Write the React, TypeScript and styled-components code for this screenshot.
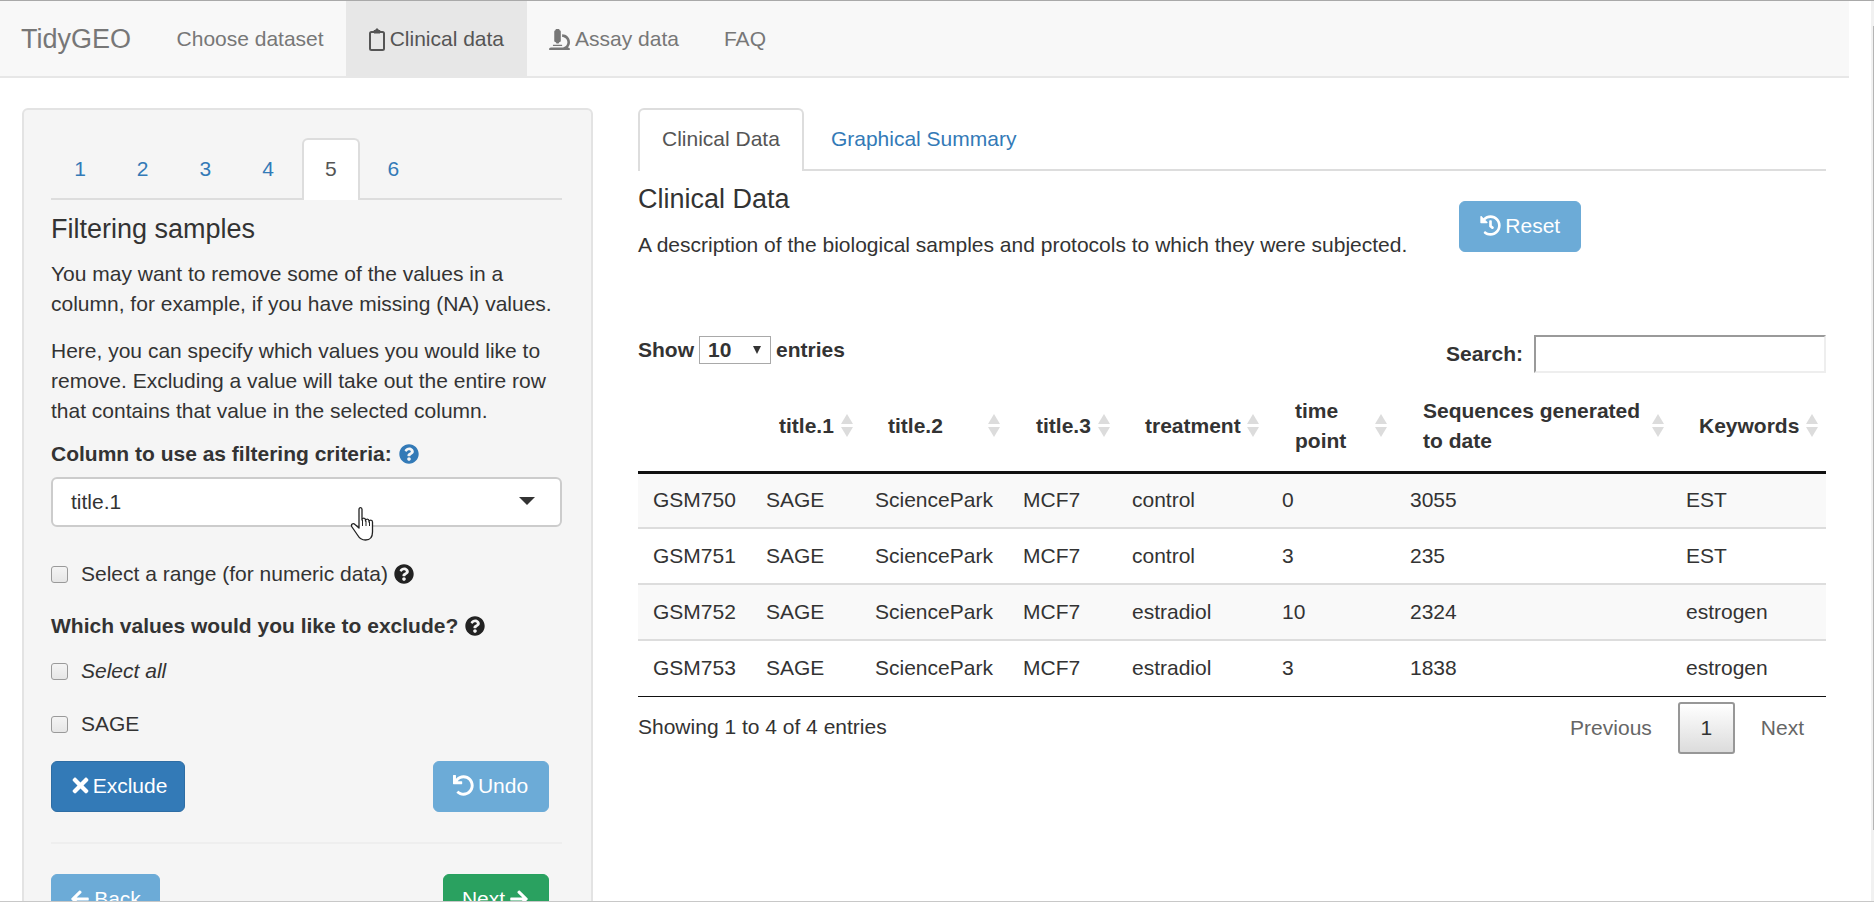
import React from "react";
import styled, { createGlobalStyle } from "styled-components";
import {
  FaArrowLeft,
  FaArrowRight,
  FaHistory,
  FaMicroscope,
  FaQuestionCircle,
  FaTimes,
  FaUndo,
} from "react-icons/fa";

const GlobalStyle = createGlobalStyle`
  html, body {
    margin: 0;
    padding: 0;
    height: 100%;
    overflow: hidden;
    background: #fff;
  }
  body {
    font-family: "Liberation Sans", Arial, sans-serif;
    font-size: 21px;
    line-height: 30px;
    color: #333;
  }
  * { box-sizing: border-box; }
`;

const Viewport = styled.div`
  position: relative;
  width: 1874px;
  height: 902px;
  overflow: hidden;
  border-top: 1px solid #a9a9a9;
  border-bottom: 1px solid #c8c8c8;
`;

const ScrollTrack = styled.div`
  position: absolute;
  top: 0;
  right: 0;
  bottom: 0;
  width: 3px;
  background: #f1f1f1;
`;

const ScrollThumb = styled.div`
  position: absolute;
  top: 25px;
  right: 0;
  height: 804px;
  width: 1px;
  background: #b5b5b5;
`;

const Page = styled.div`
  width: 1849px;
`;

const Navbar = styled.nav`
  display: flex;
  align-items: stretch;
  height: 77px;
  background: #f8f8f8;
  border-bottom: 2px solid #e7e7e7;
`;

const Brand = styled.a`
  display: flex;
  align-items: center;
  padding: 1px 23px 0 21px;
  font-size: 27px;
  color: #777;
`;

const NavItem = styled.a<{ $active?: boolean }>`
  display: flex;
  align-items: center;
  gap: 5px;
  padding: 1px 22.500px 0;
  color: ${(p) => (p.$active ? "#555" : "#777")};
  background: ${(p) => (p.$active ? "#e7e7e7" : "transparent")};
`;

const Main = styled.main`
  display: grid;
  grid-template-columns: 571.500px 1fr;
  column-gap: 45px;
  padding: 30px 23px 0 21.500px;
`;

const Panel = styled.section`
  padding: 28px 29px 19px 27.500px;
  background: #f5f5f5;
  border: 2px solid #e3e3e3;
  border-radius: 6px;
`;

const PanelTabs = styled.ul`
  display: flex;
  gap: 4.700px;
  margin: 0;
  padding: 0;
  list-style: none;
  border-bottom: 2px solid #ddd;
  height: 62px;
`;

const PanelTab = styled.li<{ $active?: boolean }>`
  width: 58px;
  height: 62px;
  padding-top: 14px;
  text-align: center;
  color: ${(p) => (p.$active ? "#555" : "#337ab7")};
  background: ${(p) => (p.$active ? "#fff" : "transparent")};
  border: 2px solid ${(p) => (p.$active ? "#ddd" : "transparent")};
  border-bottom: 0;
  border-radius: 6px 6px 0 0;
`;

const PanelTitle = styled.h3`
  margin: 14px 0 15px;
  font-size: 27px;
  font-weight: 400;
  line-height: 30px;
`;

const Paragraph = styled.p`
  margin: 0 0 17px;
  line-height: 30px;

  & + & {
    margin-bottom: 13px;
  }
`;

const FieldLabel = styled.div`
  display: flex;
  align-items: center;
  gap: 7px;
  font-weight: 700;
`;

const SelectBox = styled.div`
  position: relative;
  display: flex;
  align-items: center;
  justify-content: space-between;
  height: 50px;
  margin: 8px 0 32px;
  padding: 0 25px 0 18px;
  background: #fff;
  border: 2px solid #ccc;
  border-radius: 6px;
`;

const Caret = styled.span`
  width: 0;
  height: 0;
  margin-bottom: 3px;
  border-left: 8px solid transparent;
  border-right: 8px solid transparent;
  border-top: 8px solid #333;
`;

const CursorMark = styled.svg`
  position: absolute;
  left: 297px;
  top: 27px;
`;

const CheckRow = styled.label<{ $gap: number; $top?: number }>`
  display: flex;
  align-items: center;
  gap: 6px;
  margin-top: ${(p) => p.$top ?? 0}px;
  margin-bottom: ${(p) => p.$gap}px;
`;

const CheckBox = styled.span`
  flex: none;
  width: 17px;
  height: 17px;
  margin-right: 7px;
  background: linear-gradient(#f4f4f4, #e6e6e6);
  border: 1.500px solid #9a9a9a;
  border-radius: 3px;
`;

const ButtonRow = styled.div`
  display: flex;
  justify-content: space-between;
  padding-right: 13.500px;
`;

const ActionButton = styled.button<{ $tone: "primary" | "muted" | "success"; $width: number }>`
  display: inline-flex;
  align-items: center;
  justify-content: center;
  gap: 4px;
  width: ${(p) => p.$width}px;
  height: 51px;
  padding: 0 0 2px;
  font: inherit;
  color: #fff;
  border-radius: 6px;
  border: 1px solid
    ${(p) =>
      p.$tone === "primary" ? "#2e6da4" : p.$tone === "success" ? "#27a15f" : "#6cabd7"};
  background: ${(p) =>
    p.$tone === "primary" ? "#337ab7" : p.$tone === "success" ? "#2aa160" : "#6cabd7"};
`;

const CloseIcon = styled(FaTimes)`
  margin-right: -3px;
`;

const Divider = styled.hr`
  margin: 30px 0;
  border: 0;
  border-top: 2px solid #eee;
`;

const ContentTabs = styled.div`
  display: flex;
  height: 63px;
  border-bottom: 2px solid #ddd;
`;

const ContentTab = styled.a<{ $active?: boolean }>`
  height: 63px;
  padding: 14px 22px 0;
  color: ${(p) => (p.$active ? "#555" : "#337ab7")};
  background: ${(p) => (p.$active ? "#fff" : "transparent")};
  border: 2px solid ${(p) => (p.$active ? "#ddd" : "transparent")};
  border-bottom: 0;
  border-radius: 6px 6px 0 0;
  margin-right: 3px;
`;

const IntroRow = styled.div`
  display: flex;
  align-items: flex-start;
  gap: 52px;
  height: 163px;
`;

const IntroTitle = styled.h3`
  margin: 13px 0 16px;
  font-size: 27px;
  font-weight: 400;
  line-height: 30px;
`;

const IntroText = styled.p`
  margin: 0;
`;

const ResetButton = styled(ActionButton)`
  margin-top: 30px;
`;

const TableControls = styled.div`
  display: flex;
  justify-content: space-between;
  align-items: flex-start;
  height: 44px;
`;

const LengthControl = styled.div`
  display: flex;
  align-items: center;
  gap: 5px;
  height: 28px;
  margin-top: 2px;
  font-weight: 700;
`;

const LengthSelect = styled.div`
  display: flex;
  align-items: center;
  justify-content: space-between;
  width: 72px;
  height: 28px;
  padding: 0 8px;
  background: #fff;
  border: 1px solid #a9a9a9;
`;

const SmallArrow = styled.span`
  width: 0;
  height: 0;
  border-left: 4px solid transparent;
  border-right: 4px solid transparent;
  border-top: 8px solid #333;
  margin-right: 1px;
`;

const SearchControl = styled.div`
  display: flex;
  align-items: center;
  gap: 11px;
  margin-top: 1px;
  font-weight: 700;
`;

const SearchInput = styled.div`
  width: 292px;
  height: 38px;
  background: #fff;
  border: 2px solid;
  border-color: #9a9a9a #eee #eee #9a9a9a;
`;

const DataTable = styled.table`
  width: 100%;
  table-layout: fixed;
  border-collapse: collapse;
`;

const HeadCell = styled.th`
  position: relative;
  height: 94px;
  padding: 4px 30px 0 28px;
  line-height: 30px;
  text-align: left;
  vertical-align: middle;
  font-weight: 700;
  border-bottom: 3px solid #111;
`;

const SortMark = styled.span<{ $right: number }>`
  position: absolute;
  top: 50%;
  right: ${(p) => p.$right}px;
  margin-top: -10px;
  display: flex;
  flex-direction: column;
  gap: 3px;
`;

const SortUp = styled.i`
  width: 0;
  height: 0;
  border-left: 6px solid transparent;
  border-right: 6px solid transparent;
  border-bottom: 10px solid #dcdcdc;
`;

const SortDown = styled.i`
  width: 0;
  height: 0;
  border-left: 6px solid transparent;
  border-right: 6px solid transparent;
  border-top: 10px solid #dcdcdc;
`;

const Row = styled.tr<{ $striped: boolean }>`
  background: ${(p) => (p.$striped ? "#f9f9f9" : "#fff")};
`;

const Cell = styled.td<{ $last: boolean }>`
  height: 56px;
  padding: 0 15px;
  border-bottom: ${(p) => (p.$last ? "1px solid #111" : "2px solid #ddd")};
`;

const TableFooter = styled.div`
  display: flex;
  justify-content: space-between;
  padding-top: 5px;
`;

const EntryInfo = styled.div`
  padding-top: 10px;
`;

const Pagination = styled.div`
  display: flex;
  align-items: center;
  gap: 26px;
  padding-right: 22px;
  color: #666;
`;

const PageBox = styled.span`
  display: flex;
  align-items: center;
  justify-content: center;
  width: 57px;
  height: 52px;
  color: #333;
  background: linear-gradient(#fff, #dcdcdc);
  border: 2px solid #979797;
  border-radius: 3px;
`;

const columns = [
  { title: "", width: 113 },
  { title: "title.1", width: 109 },
  { title: "title.2", width: 148 },
  { title: "title.3", width: 109 },
  { title: "treatment", width: 150 },
  { title: "time point", width: 128 },
  { title: "Sequences generated to date", width: 276 },
  { title: "Keywords", width: 155 },
];

const rows = [
  ["GSM750", "SAGE", "SciencePark", "MCF7", "control", "0", "3055", "EST"],
  ["GSM751", "SAGE", "SciencePark", "MCF7", "control", "3", "235", "EST"],
  ["GSM752", "SAGE", "SciencePark", "MCF7", "estradiol", "10", "2324", "estrogen"],
  ["GSM753", "SAGE", "SciencePark", "MCF7", "estradiol", "3", "1838", "estrogen"],
];

const sortOffsets = [0, 7, 8, 7, 8, 8, 7, 8];

const ClipboardIcon = () => (
  <svg width="16" height="23" viewBox="0 0 16 23" fill="none">
    <rect x="1" y="4" width="14" height="18" rx="1.500" stroke="#555" strokeWidth="2" />
    <path d="M5 5V2.500h2V1h2v1.500h2V5z" fill="#555" stroke="#555" />
  </svg>
);

const HandCursor = () => (
  <CursorMark width="26" height="36" viewBox="0 0 26 36">
    <path
      d="M9 22V3.500C9 1 12 1 12 3.500V14c0-2.500 3.500-2.500 3.500 0v1c0-2.500 3.500-2.500 3.500 0v1c0-2.500 3.500-2.500 3.500 0v10c0 5-2.500 8-7 8-4 0-6-1.500-8-5L2 21c-1.500-2.500 1-4.500 3-2.500z"
      fill="#fff"
      stroke="#222"
      strokeWidth="1.300"
      strokeLinejoin="round"
    />
    <path d="M12.500 14v6M16 15v5M19.500 16v4" stroke="#222" strokeWidth="1" />
  </CursorMark>
);

export default function App() {
  return (
    <Viewport>
      <GlobalStyle />
      <Page>
        <Navbar>
          <Brand>TidyGEO</Brand>
          <NavItem>Choose dataset</NavItem>
          <NavItem $active>
            <ClipboardIcon />
            Clinical data
          </NavItem>
          <NavItem>
            <FaMicroscope size={21} />
            Assay data
          </NavItem>
          <NavItem>FAQ</NavItem>
        </Navbar>
        <Main>
          <Panel>
            <PanelTabs>
              {[1, 2, 3, 4, 5, 6].map((n) => (
                <PanelTab key={n} $active={n === 5}>
                  {n}
                </PanelTab>
              ))}
            </PanelTabs>
            <PanelTitle>Filtering samples</PanelTitle>
            <Paragraph>
              You may want to remove some of the values in a column, for example, if you have
              missing (NA) values.
            </Paragraph>
            <Paragraph>
              Here, you can specify which values you would like to remove. Excluding a value will
              take out the entire row that contains that value in the selected column.
            </Paragraph>
            <FieldLabel>
              Column to use as filtering criteria:
              <FaQuestionCircle size={20} color="#337ab7" />
            </FieldLabel>
            <SelectBox>
              title.1
              <Caret />
              <HandCursor />
            </SelectBox>
            <CheckRow $gap={22}>
              <CheckBox />
              Select a range (for numeric data)
              <FaQuestionCircle size={20} color="#222" />
            </CheckRow>
            <FieldLabel>
              Which values would you like to exclude?
              <FaQuestionCircle size={20} color="#222" />
            </FieldLabel>
            <CheckRow $gap={23} $top={15}>
              <CheckBox />
              <em>Select all</em>
            </CheckRow>
            <CheckRow $gap={22}>
              <CheckBox />
              SAGE
            </CheckRow>
            <ButtonRow>
              <ActionButton $tone="primary" $width={134}>
                <CloseIcon size={23} />
                Exclude
              </ActionButton>
              <ActionButton $tone="muted" $width={116}>
                <FaUndo size={21} />
                Undo
              </ActionButton>
            </ButtonRow>
            <Divider />
            <ButtonRow>
              <ActionButton $tone="muted" $width={109}>
                <FaArrowLeft size={20} />
                Back
              </ActionButton>
              <ActionButton $tone="success" $width={106}>
                Next
                <FaArrowRight size={20} />
              </ActionButton>
            </ButtonRow>
          </Panel>
          <div>
            <ContentTabs>
              <ContentTab $active>Clinical Data</ContentTab>
              <ContentTab>Graphical Summary</ContentTab>
            </ContentTabs>
            <IntroRow>
              <div>
                <IntroTitle>Clinical Data</IntroTitle>
                <IntroText>
                  A description of the biological samples and protocols to which they were
                  subjected.
                </IntroText>
              </div>
              <ResetButton $tone="muted" $width={122}>
                <FaHistory size={21} />
                Reset
              </ResetButton>
            </IntroRow>
            <TableControls>
              <LengthControl>
                Show
                <LengthSelect>
                  10
                  <SmallArrow />
                </LengthSelect>
                entries
              </LengthControl>
              <SearchControl>
                Search:
                <SearchInput />
              </SearchControl>
            </TableControls>
            <DataTable>
              <colgroup>
                {columns.map((c) => (
                  <col key={c.title} width={c.width} />
                ))}
              </colgroup>
              <thead>
                <tr>
                  {columns.map((c, i) => (
                    <HeadCell key={c.title}>
                      {c.title}
                      {i > 0 && (
                        <SortMark $right={sortOffsets[i]}>
                          <SortUp />
                          <SortDown />
                        </SortMark>
                      )}
                    </HeadCell>
                  ))}
                </tr>
              </thead>
              <tbody>
                {rows.map((r, i) => (
                  <Row key={r[0]} $striped={i % 2 === 0}>
                    {r.map((v, j) => (
                      <Cell key={j} $last={i === rows.length - 1}>
                        {v}
                      </Cell>
                    ))}
                  </Row>
                ))}
              </tbody>
            </DataTable>
            <TableFooter>
              <EntryInfo>Showing 1 to 4 of 4 entries</EntryInfo>
              <Pagination>
                <span>Previous</span>
                <PageBox>1</PageBox>
                <span>Next</span>
              </Pagination>
            </TableFooter>
          </div>
        </Main>
      </Page>
      <ScrollTrack>
        <ScrollThumb />
      </ScrollTrack>
    </Viewport>
  );
}
